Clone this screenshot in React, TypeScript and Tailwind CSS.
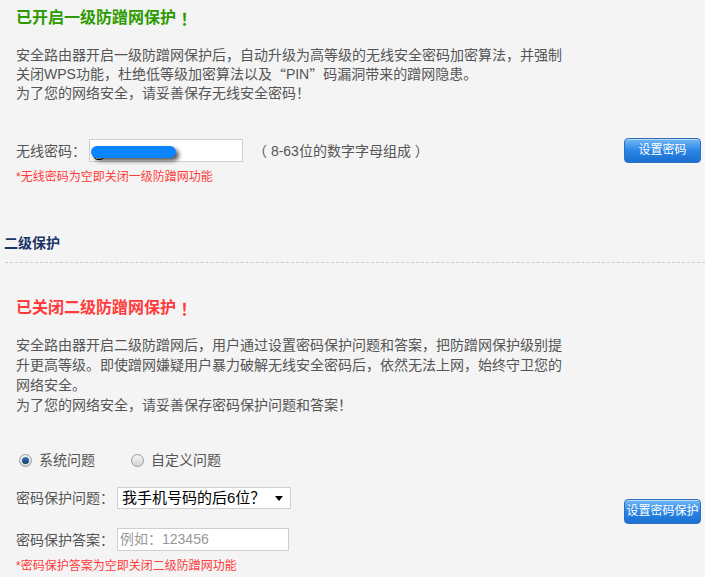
import React from "react";

const font = { fontFamily: '"Liberation Sans", "Noto Sans CJK SC", sans-serif' };
const cjk = { fontFamily: '"Noto Sans CJK SC", sans-serif' };

function BlueButton({ children }: { children: React.ReactNode }) {
  return (
    <button className="h-[25px] w-[77px] whitespace-nowrap rounded-[4px] border border-[#2f6fc0] bg-gradient-to-b from-[#72b8f5] via-[#2a86e6] to-[#1b6fd0] px-0 text-[12px] leading-[23px] text-white shadow-[inset_0_1px_0_rgba(255,255,255,0.5)]">
      {children}
    </button>
  );
}

function Radio({ checked }: { checked: boolean }) {
  return (
    <span className="flex h-[13px] w-[13px] items-center justify-center rounded-full border border-[#9a9a9a] bg-gradient-to-b from-[#f4f4f4] to-[#d4d4d4]">
      {checked && <span className="h-[7px] w-[7px] rounded-full bg-gradient-to-b from-[#3a78b8] to-[#123d6b]" />}
    </span>
  );
}

function C({ children }: { children: React.ReactNode }) {
  return (
    <span className="inline-block align-top" style={cjk}>
      {children}
    </span>
  );
}

export default function App() {
  return (
    <div className="min-h-[577px] w-[705px] bg-[#f4f4f4] text-[14px] text-[#555]" style={font}>
      {/* Section 1 */}
      <div className="px-4 pt-[8px]">
        <div className="h-[20px] text-[16px] font-bold leading-[20px] text-[#2b9b00]">
          已开启一级防蹭网保护 <C>！</C>
        </div>
        <p className="mt-[18px] leading-[19px]">
          安全路由器开启一级防蹭网保护后，自动升级为高等级的无线安全密码加密算法，并强制
          <br />
          关闭WPS功能，杜绝低等级加密算法以及<C>“</C>PIN<C>”</C>码漏洞带来的蹭网隐患。
          <br />
          为了您的网络安全，请妥善保存无线安全密码！
        </p>
      </div>

      <div className="mt-[35px] flex items-center justify-between pl-4 pr-[4px]">
        <div className="flex items-center">
          <span className="w-[73px] leading-[20px]">无线密码：</span>
          <div className="relative h-[23px] w-[154px] border border-[#cfcfcf] bg-white">
            <div className="absolute left-[3px] top-[10px] h-[10px] w-[12px] rounded-full border border-black" />
            <div className="absolute left-[1px] top-[6px] h-[12px] w-[85px] rounded-full bg-[#0a84ff] shadow-[3px_3px_4px_rgba(0,0,0,0.65)]" />
          </div>
          <span className="ml-[10px] leading-[20px]">（ 8-63位的数字字母组成 ）</span>
        </div>
        <BlueButton>设置密码</BlueButton>
      </div>

      <div className="mt-[6px] pl-4 text-[12px] leading-[16px] text-[#ff3b3b]">*无线密码为空即关闭一级防蹭网功能</div>

      {/* Section 2 header */}
      <div className="mt-[48px] pl-[4px] text-[14px] font-bold leading-[20px] text-[#1b3468]">二级保护</div>
      <div className="ml-[5px] mt-[9px] border-t border-dashed border-[#cccccc]" />

      <div className="px-4">
        <div className="mt-[35px] h-[20px] text-[16px] font-bold leading-[20px] text-[#ff3b3b]">
          已关闭二级防蹭网保护 <C>！</C>
        </div>
        <p className="mt-[17px] leading-[20px]">
          安全路由器开启二级防蹭网后，用户通过设置密码保护问题和答案，把防蹭网保护级别提
          <br />
          升更高等级。即使蹭网嫌疑用户暴力破解无线安全密码后，依然无法上网，始终守卫您的
          <br />
          网络安全。
          <br />
          为了您的网络安全，请妥善保存密码保护问题和答案！
        </p>
      </div>

      <div className="mt-[35px] flex items-center pl-[19px] leading-[20px]">
        <Radio checked />
        <span className="ml-[7px]">系统问题</span>
        <span className="ml-[36px]">
          <Radio checked={false} />
        </span>
        <span className="ml-[7px]">自定义问题</span>
      </div>

      <div className="flex items-start justify-between pl-4 pr-[4px]">
        <div>
          <div className="mt-[17px] flex items-center">
            <span className="w-[101px] leading-[20px]">密码保护问题：</span>
            <div className="flex h-[22px] w-[174px] items-center justify-between border border-[#cfcfcf] bg-white pl-[4px] pr-[7px] text-[15px] text-black">
              <span className="leading-[20px]">我手机号码的后6位？</span>
              <svg width="8" height="5" viewBox="0 0 8 5">
                <path d="M0 0h8L4 5z" fill="#000" />
              </svg>
            </div>
          </div>
          <div className="mt-[19px] flex items-center">
            <span className="w-[101px] leading-[20px]">密码保护答案：</span>
            <div className="flex h-[23px] w-[172px] items-center border border-[#cfcfcf] bg-white pl-[2px] text-[14px] text-[#999]">
              例如：123456
            </div>
          </div>
          <div className="mt-[7px] text-[12px] leading-[16px] text-[#ff3b3b]">*密码保护答案为空即关闭二级防蹭网功能</div>
        </div>
        <div className="mt-[29px]">
          <BlueButton>设置密码保护</BlueButton>
        </div>
      </div>
    </div>
  );
}
